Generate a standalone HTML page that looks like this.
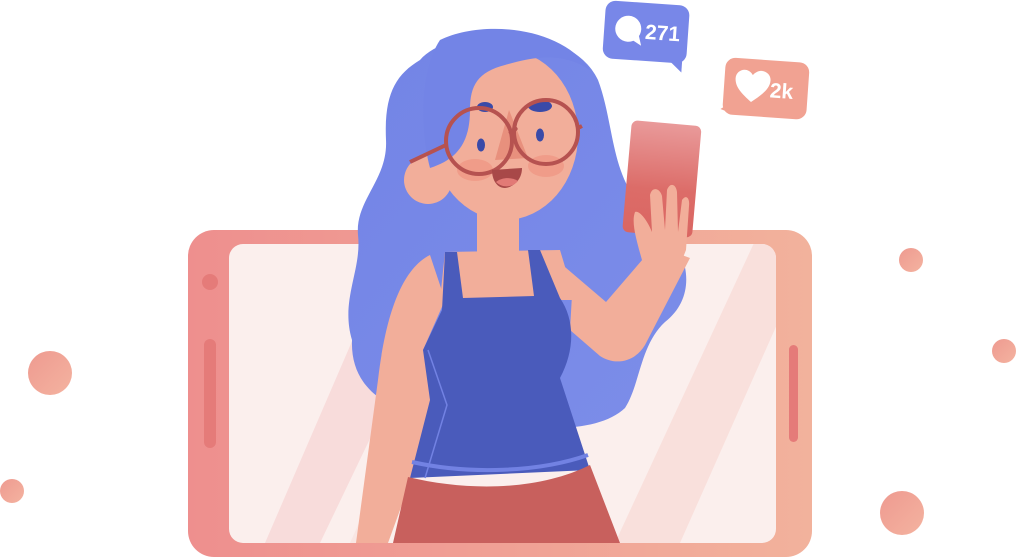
<!DOCTYPE html>
<html><head><meta charset="utf-8"><style>
html,body{margin:0;padding:0;background:#fff;width:1016px;height:560px;overflow:hidden}
svg{display:block}
</style></head><body>
<svg width="1016" height="560" viewBox="0 0 1016 560" xmlns="http://www.w3.org/2000/svg">
<defs>
<linearGradient id="fr" x1="0" x2="1" y1="0" y2="0"><stop offset="0" stop-color="#ee8f8e"/><stop offset="1" stop-color="#f2b29c"/></linearGradient>
<linearGradient id="dot" x1="0" x2="1" y1="0" y2="1"><stop offset="0" stop-color="#ee9a90"/><stop offset="1" stop-color="#f4b3a0"/></linearGradient>
<linearGradient id="ph" x1="0" x2="0" y1="0" y2="1"><stop offset="0" stop-color="#e99a9a"/><stop offset="0.6" stop-color="#dc6c68"/><stop offset="1" stop-color="#da6662"/></linearGradient>
<linearGradient id="hair" x1="0" x2="1" y1="0" y2="1"><stop offset="0" stop-color="#7384e6"/><stop offset="1" stop-color="#7c8de9"/></linearGradient>
<clipPath id="scr"><rect x="229" y="244" width="547" height="299" rx="14"/></clipPath>
</defs>

<circle cx="50" cy="373" r="22" fill="url(#dot)"/>
<circle cx="12" cy="491" r="12" fill="url(#dot)"/>
<circle cx="911" cy="260" r="12" fill="url(#dot)"/>
<circle cx="1004" cy="351" r="12" fill="url(#dot)"/>
<circle cx="902" cy="513" r="22" fill="url(#dot)"/>

<rect x="188" y="230" width="624" height="327" rx="26" fill="url(#fr)"/>
<rect x="229" y="244" width="547" height="299" rx="14" fill="#fbefed"/>
<g clip-path="url(#scr)">
<polygon points="265,543 320,543 470,230 400,230" fill="#f8dcdb"/>
<polygon points="615,543 680,543 810,250 760,230" fill="#f9e0dc"/>
<polygon points="350,543 380,543 520,230 490,230" fill="#f9e6e3"/>
</g>
<circle cx="210" cy="282" r="8" fill="#e57b79"/>
<rect x="204" y="339" width="12" height="109" rx="6" fill="#e57b79"/>
<rect x="789" y="345" width="9" height="97" rx="4.5" fill="#e57b79"/>

<!-- hair back -->
<path d="M420 60 C450 25 570 20 598 80 C615 125 610 180 648 212 C690 245 700 295 665 322 C640 345 640 385 625 408 C600 432 540 432 500 420 L440 420 C390 412 350 390 352 340 C340 300 362 270 358 235 C355 200 388 180 386 140 C384 95 395 75 420 60 Z" fill="url(#hair)"/>

<!-- left arm -->
<path d="M430 255 C400 270 385 320 378 380 L356 543 L388 543 L440 400 L423 350 L445 300 Z" fill="#f2ae9a"/>
<!-- right arm -->
<path d="M545 250 L606 302 L655 245 L690 258 L645 345 C635 362 615 366 600 356 L570 330 L572 295 Z" fill="#f2ae9a"/>
<!-- phone in hand -->
<g transform="rotate(5 662 178)"><rect x="627" y="123" width="70" height="112" rx="6" fill="url(#ph)"/></g>
<!-- hand -->
<path d="M645 272 C640 250 630 225 635 212 C640 210 648 222 652 232 L650 195 C652 186 660 188 662 196 L665 230 L667 190 C670 182 676 184 677 192 L678 232 L682 200 C686 194 690 198 689 206 L686 250 L675 278 Z" fill="#f2ae9a"/>

<rect x="477" y="195" width="42" height="70" fill="#f2ae9a"/>
<path d="M445 252 L560 250 L575 300 L440 300 Z" fill="#f2ae9a"/>
<path d="M445 252 L457 252 L463 298 L534 296 L528 250 L540 250 L560 298 C575 320 575 350 560 378 L590 470 L410 478 L430 400 L423 350 L442 310 Z" fill="#4a5bbb"/>
<path d="M428 350 L447 405 L425 478" stroke="#7282e3" stroke-width="1.5" fill="none"/>
<path d="M412 462 C470 475 540 472 588 455" stroke="#7282e3" stroke-width="4" fill="none"/>
<path d="M408 477 C470 492 540 490 590 465 L620 543 L393 543 Z" fill="#c8605d"/>

<!-- face -->
<ellipse cx="505" cy="135" rx="73" ry="85" fill="#f2ae9a"/>
<circle cx="428" cy="180" r="24" fill="#f2ae9a"/>
<path d="M440 40 C480 20 560 25 590 70 C560 50 530 58 505 65 C478 72 470 85 470 110 C470 145 455 160 430 168 C420 130 420 70 440 40 Z" fill="#7384e6"/>
<ellipse cx="475" cy="170" rx="18" ry="11" fill="#f09c89"/>
<ellipse cx="546" cy="166" rx="18" ry="11" fill="#f09c89"/>
<polygon points="509,110 495,160 528,158" fill="#e8907d"/>
<ellipse cx="485" cy="107" rx="8" ry="5" fill="#3a4aa8"/>
<ellipse cx="540" cy="106" rx="12" ry="6" fill="#3a4aa8"/>
<ellipse cx="481" cy="145" rx="4" ry="6.5" fill="#3a4aa8"/>
<ellipse cx="540" cy="135" rx="4" ry="6.5" fill="#3a4aa8"/>
<g stroke="#b65250" stroke-width="4" fill="none">
<circle cx="479" cy="141" r="33"/>
<circle cx="546" cy="132" r="32"/>
<path d="M510 134 C514 128 518 128 514 130"/>
<line x1="446" y1="145" x2="410" y2="162"/>
<line x1="578" y1="128" x2="582" y2="126"/>
</g>
<path d="M492 170 L522 168 C522 182 510 188 505 188 C497 188 492 180 492 170 Z" fill="#a84848"/>
<path d="M496 182 C502 177 512 177 518 181 C512 188 502 188 496 182 Z" fill="#e27a76"/>

<!-- comment badge -->
<g transform="rotate(4 646 33)">
<rect x="604" y="3" width="84" height="58" rx="10" fill="#7887e8"/>
<polygon points="670,58 684,58 684,70" fill="#7887e8"/>
<circle cx="628" cy="30" r="13" fill="#fff"/>
<polygon points="631,40 642,46 639,36" fill="#fff"/>
<text x="645" y="39" font-family="Liberation Sans, sans-serif" font-weight="bold" font-size="21" fill="#fff">271</text>
</g>
<!-- heart badge -->
<g transform="rotate(4 765 88)">
<rect x="724" y="60" width="84" height="57" rx="10" fill="#f1a292"/>
<polygon points="722,112 732,105 735,116" fill="#f1a292"/>
<path d="M752 103 C742 95 735 89 735 80 C735 72 746 67 752 76 C759 67 770 72 770 80 C770 89 762 95 752 103 Z" fill="#fff"/>
<text x="770" y="97" font-family="Liberation Sans, sans-serif" font-weight="bold" font-size="21" fill="#fff">2k</text>
</g>
</svg>
</body></html>
